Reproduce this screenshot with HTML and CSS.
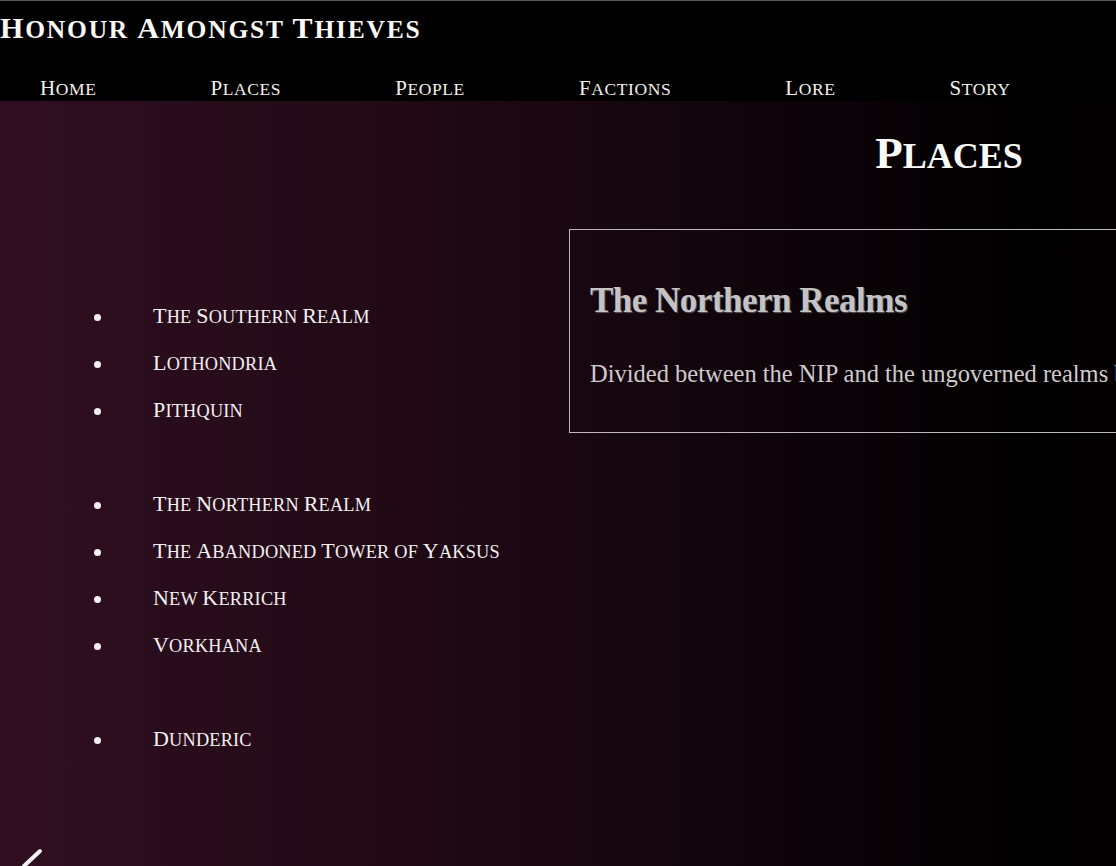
FILE: index.html
```html
<!DOCTYPE html>
<html lang="en">
<head>
<meta charset="utf-8">
<title>Places - Honour Amongst Thieves</title>
<link rel="stylesheet" href="styles.css">
</head>
<body>
<header class="site-header">
  <h1 class="site-title"><span class="ini">H</span>onour <span class="ini">A</span>mongst <span class="ini">T</span>hieves</h1>
  <nav class="site-nav">
    <a href="#"><span class="ini">H</span>ome</a>
    <a href="#"><span class="ini">P</span>laces</a>
    <a href="#"><span class="ini">P</span>eople</a>
    <a href="#"><span class="ini">F</span>actions</a>
    <a href="#"><span class="ini">L</span>ore</a>
    <a href="#"><span class="ini">S</span>tory</a>
  </nav>
</header>
<main class="page">
  <section class="place-list">
    <ul class="group">
      <li><span><span class="ini">T</span>he <span class="ini">S</span>outhern <span class="ini">R</span>ealm</span></li>
      <li><span><span class="ini">L</span>othondria</span></li>
      <li><span><span class="ini">P</span>ithquin</span></li>
    </ul>
    <ul class="group">
      <li><span><span class="ini">T</span>he <span class="ini">N</span>orthern <span class="ini">R</span>ealm</span></li>
      <li><span><span class="ini">T</span>he <span class="ini">A</span>bandoned <span class="ini">T</span>ower of <span class="ini">Y</span>aksus</span></li>
      <li><span><span class="ini">N</span>ew <span class="ini">K</span>errich</span></li>
      <li><span><span class="ini">V</span>orkhana</span></li>
    </ul>
    <ul class="group">
      <li><span><span class="ini">D</span>underic</span></li>
    </ul>
  </section>
  <section class="detail">
    <h2 class="page-title"><span class="ini">P</span>laces</h2>
    <article class="card">
      <h3 class="card-title">The Northern Realms</h3>
      <p class="card-text">Divided between the NIP and the ungoverned realms beyond the mountains.</p>
    </article>
  </section>
</main>
<a class="back" href="#" aria-label="Back">
  <svg width="30" height="40" viewBox="0 0 30 40"><polyline points="22,5 6,20 22,35" fill="none" stroke="#f4f0f2" stroke-width="4" stroke-linecap="round" stroke-linejoin="round"/></svg>
</a>
</body>
</html>
```

FILE: styles.css
```css
* { box-sizing: border-box; }
html, body { margin: 0; padding: 0; }
body {
  background: #000;
  color: #f2eef0;
  font-family: "Liberation Serif", "DejaVu Serif", serif;
  overflow: hidden;
  height: 866px;
}
.ini { line-height: 0; }
.site-header {
  height: 101px;
  background: #000;
  border-top: 1px solid #5a5a5a;
}
.site-title {
  margin: 14px 0 0 0;
  font-size: 25.5px;
  line-height: 30px;
  font-weight: bold;
  text-transform: uppercase;
  letter-spacing: 1.8px;
  color: #fbf8f4;
  white-space: nowrap;
}
.site-title .ini { font-size: 30px; }
.site-nav {
  display: flex;
  gap: 114px;
  padding-left: 40px;
  margin-top: 34px;
  font-size: 17.5px;
  line-height: 21px;
  text-transform: uppercase;
  letter-spacing: 0.6px;
}
.site-nav .ini { font-size: 21px; }
.site-nav a {
  color: #f3f0ec;
  text-decoration: none;
  white-space: nowrap;
}
.page {
  display: flex;
  height: 765px;
  background: linear-gradient(to right, #300f20 0%, #1a0711 50%, #000 93%, #040002 100%);
}
.place-list {
  flex: 0 0 569px;
  min-width: 0;
  padding-top: 193px;
}
.group {
  list-style: none;
  margin: 0 0 47px 0;
  padding: 0 0 0 94px;
}
.group li {
  display: flex;
  align-items: center;
  height: 47px;
  line-height: 47px;
  font-size: 18.3px;
  text-transform: uppercase;
  letter-spacing: 0.2px;
  color: #f4f0f2;
  white-space: nowrap;
}
.group li .ini { font-size: 22px; }
.group li::before {
  content: "";
  flex: 0 0 7px;
  height: 7px;
  border-radius: 50%;
  background: #f4f0f2;
  margin-right: 52px;
}
.detail {
  flex: 0 0 760px;
  min-width: 0;
}
.page-title {
  margin: 33px 0 50px 0;
  text-align: center;
  font-size: 36px;
  line-height: 45px;
  font-weight: bold;
  text-transform: uppercase;
  color: #fbfbfb;
}
.page-title .ini { font-size: 45px; }
.card {
  border: 1px solid #bdb8ba;
  height: 204px;
  padding: 0 20px;
  overflow: visible;
}
.card-title {
  margin: 49px 0 0 0;
  font-size: 35px;
  line-height: 44px;
  font-weight: bold;
  color: #c4c2c3;
  letter-spacing: -0.5px;
  text-shadow: 1px 1px 1px #555;
  white-space: nowrap;
}
.card-text {
  margin: 36px 0 0 0;
  font-size: 24.5px;
  line-height: 30px;
  color: #cfcacc;
  white-space: nowrap;
}
.back {
  position: fixed;
  left: 18px;
  top: 846px;
}
```
